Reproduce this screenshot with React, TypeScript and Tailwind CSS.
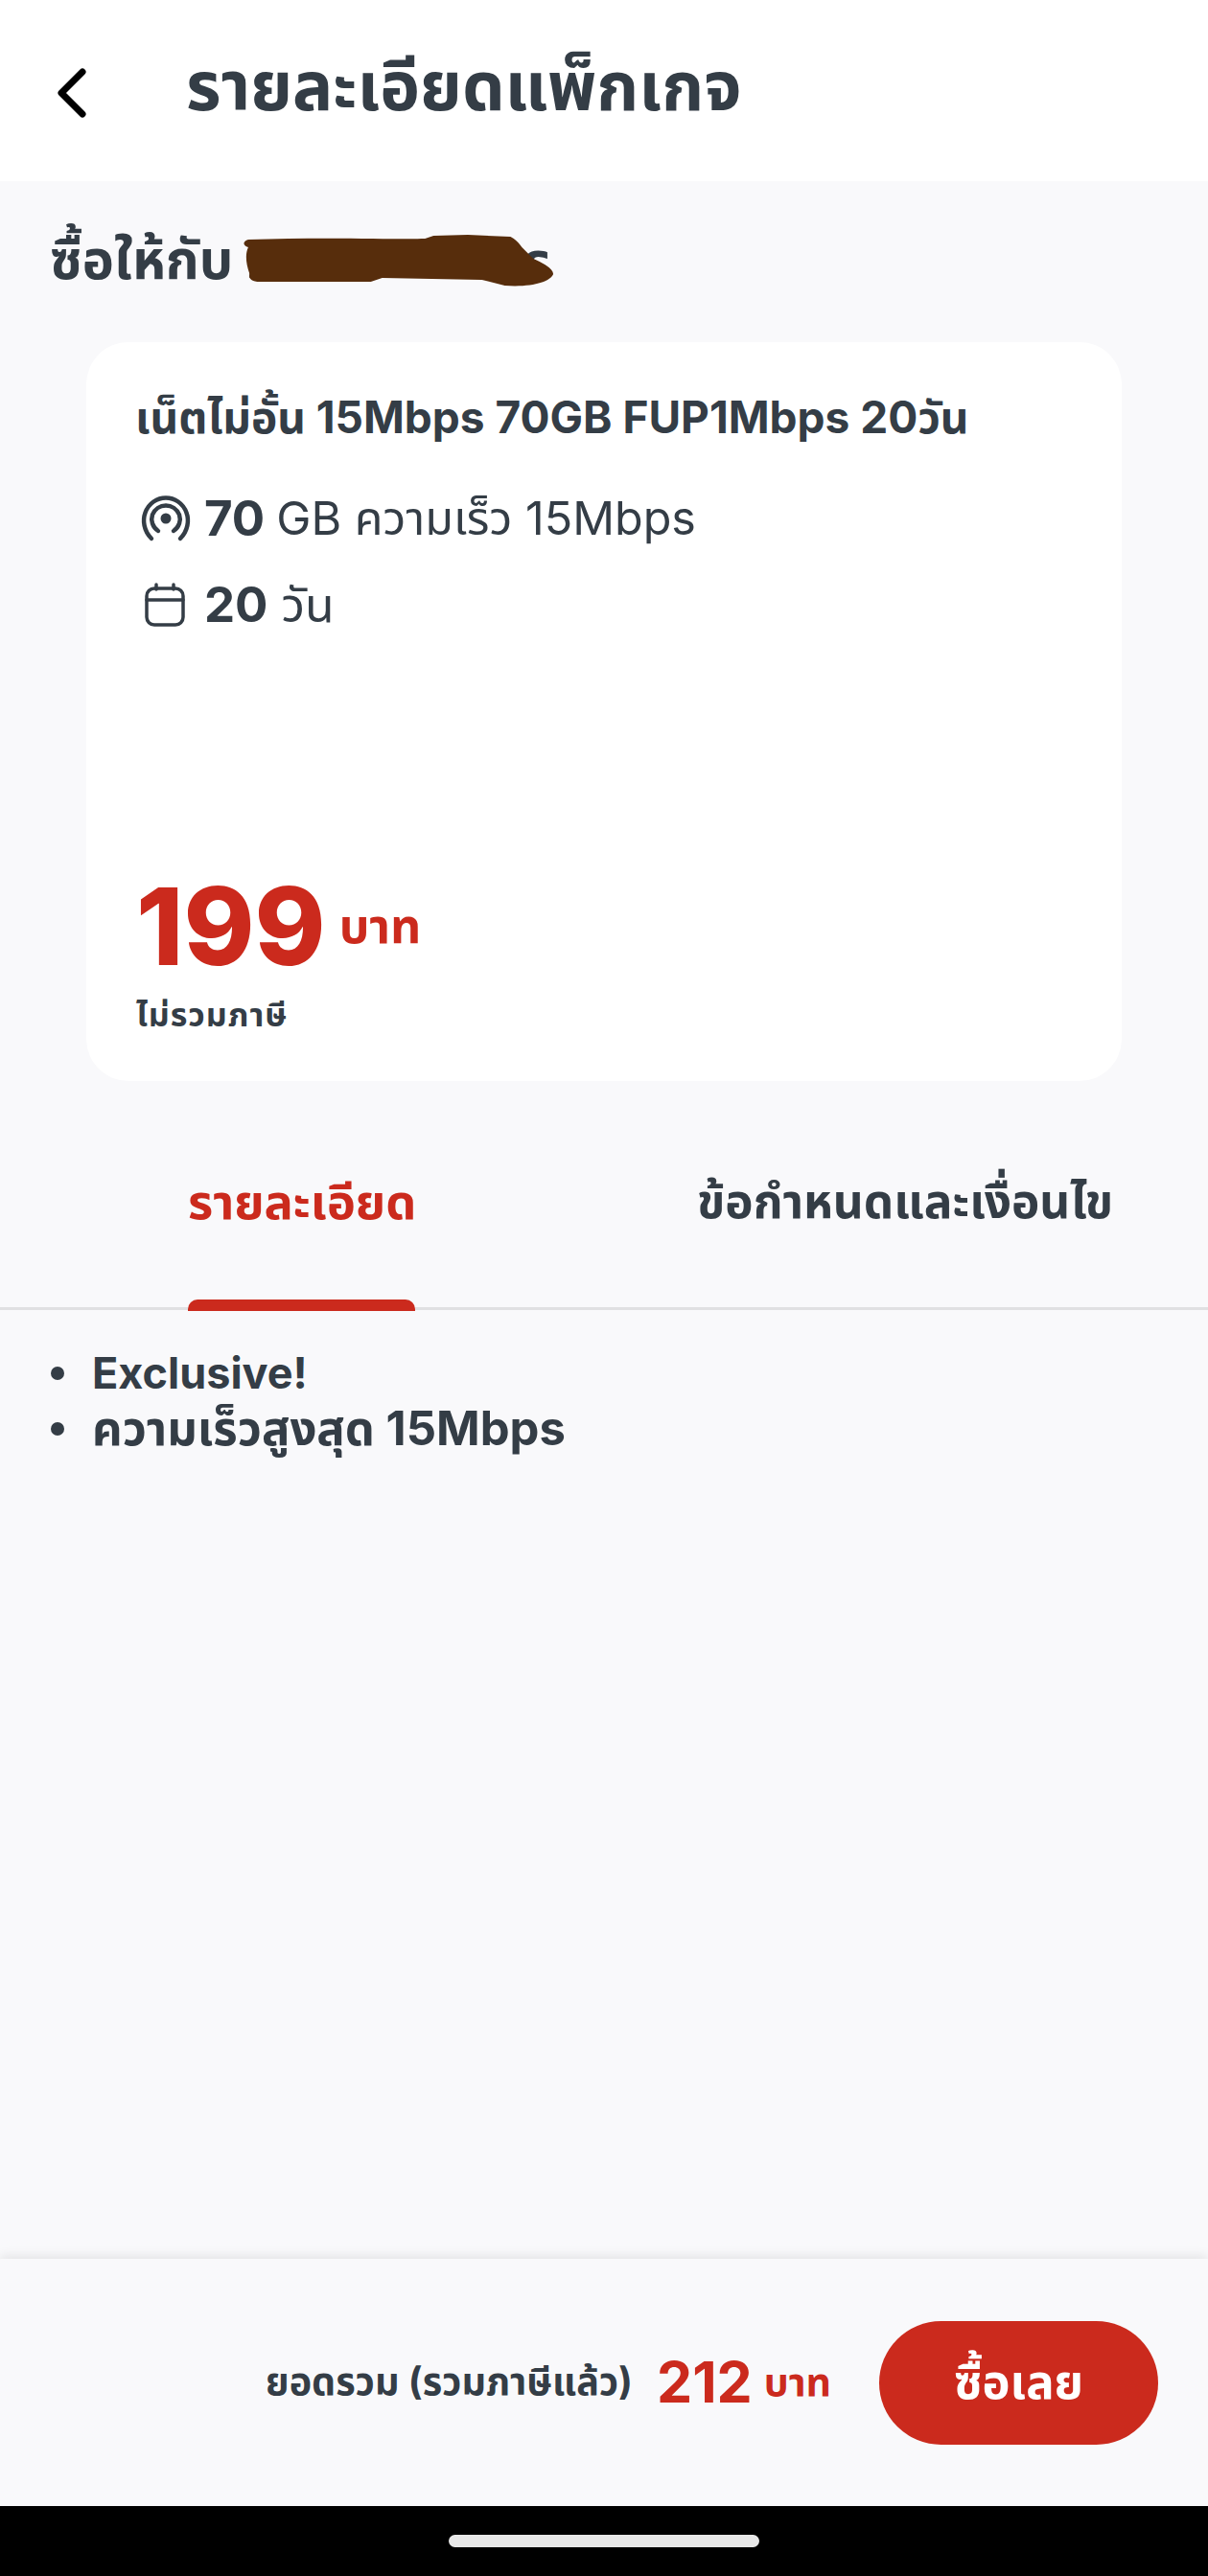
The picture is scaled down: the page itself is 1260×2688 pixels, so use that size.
import React from "react";

const font = { fontFamily: "Inter, 'Noto Sans', 'Noto Sans Thai', Roboto, sans-serif" };

function Signal() {
  return (
    <svg width="54" height="50" viewBox="0 0 54 50" fill="none" stroke="#343d46" strokeLinecap="round">
      <path d="M12 46 C4 38 2.500 27 5.500 19 C9 9 18 3.500 27 3.500 C36 3.500 45 9 48.500 19 C51.500 27 50 38 42 46" strokeWidth="4.500" />
      <path d="M19 38 C13 34 11 27 13 21 C15.500 15 21 11.500 27 11.500 C33 11.500 38.500 15 41 21 C43 27 41 34 35 38" strokeWidth="4.500" />
      <circle cx="27" cy="25" r="5.500" fill="#343d46" stroke="none" />
    </svg>
  );
}

function Calendar() {
  return (
    <svg width="42" height="46" viewBox="0 0 42 46" fill="none" stroke="#343d46" strokeWidth="3.500" strokeLinecap="round">
      <rect x="2" y="6" width="38" height="38" rx="8" />
      <path d="M2 18 H40 M12 2 V7 M30 2 V7" />
    </svg>
  );
}

function Scribble() {
  return (
    <svg className="absolute top-[55px] left-[250px]" width="336" height="58" viewBox="0 0 226 58" preserveAspectRatio="none" fill="#572d0c">
      <path d="M6 6 C60 3 110 6 130 5 L136 2 L160 1 L190 3 C194 6 196 10 198 14 L206 26 C212 30 220 36 220 42 C218 50 205 56 186 54 L170 48 L100 46 L92 50 L14 50 C8 50 6 46 7 42 C4 30 4 20 6 14 C2 12 2 8 6 6 Z" />
    </svg>
  );
}

export default function App() {
  return (
    <div className="flex h-[2688px] w-[1260px] flex-col overflow-hidden bg-[#f9f9fb] text-[#343d46]" style={font}>
      <header className="flex h-[189px] shrink-0 items-center bg-white pb-[8px]">
        <svg className="mt-[12px] ml-[60px] shrink-0" width="30" height="52" viewBox="0 0 30 52" fill="none" stroke="#000" strokeWidth="7" strokeLinecap="round" strokeLinejoin="round">
          <path d="M26 4 L4 26 L26 48" />
        </svg>
        <h1 className="ml-[104px] text-[70.500px] leading-none font-bold whitespace-nowrap">รายละเอียดแพ็กเกจ</h1>
      </header>

      <div className="relative flex h-[168px] shrink-0 items-center pb-[4px] pl-[52px] text-[56px] font-bold">
        <span>ซื้อให้กับ ธ</span>
        <span className="absolute top-[42px] left-[546px]">ร</span>
        <Scribble />
      </div>

      <section className="mx-[90px] flex h-[771px] shrink-0 flex-col rounded-[44px] bg-white px-[52px] pt-[48px]">
        <h2 className="-ml-[1px] text-[46px] leading-[60px] font-bold whitespace-nowrap">เน็ตไม่อั้น 15Mbps 70GB FUP1Mbps 20วัน</h2>
        <div className="mt-[46px] flex h-[60px] items-center">
          <span className="ml-[4px] flex"><Signal /></span>
          <span className="ml-[13px] text-[51px] font-bold">70</span>
          <span className="ml-[12px] text-[48.500px]">GB ความเร็ว 15Mbps</span>
        </div>
        <div className="mt-[30px] flex h-[60px] items-center">
          <span className="ml-[9px] flex"><Calendar /></span>
          <span className="ml-[20px] text-[51px] font-bold">20</span>
          <span className="ml-[14px] text-[50px]">วัน</span>
        </div>
        <div className="mt-auto flex items-center text-[#cb2a1d]">
          <span className="text-[112px] leading-[110px] font-extrabold">199</span>
          <span className="ml-[14px] text-[50px] leading-[60px] font-bold">บาท</span>
        </div>
        <div className="mt-[18px] mb-[49px] text-[34px] leading-[40px] font-bold tracking-[1px]">ไม่รวมภาษี</div>
      </section>

      <nav className="relative flex h-[239px] shrink-0 border-b-[3px] border-[#e0e0e2] text-[50px] font-bold">
        <div className="ml-[196px] pt-[88px] text-[50.500px] text-[#cb2a1d]">รายละเอียด</div>
        <div className="absolute top-[228px] left-[196px] h-[12px] w-[237px] rounded-t-[10px] bg-[#cb2a1d]" />
        <div className="absolute top-[88px] left-[727px] text-[49.500px]">ข้อกำหนดและเงื่อนไข</div>
      </nav>

      <ul className="mt-[37px] ml-[53px] flex flex-col text-[45px] leading-[58px] font-bold">
        <li className="flex items-center">
          <span className="mr-[29px] h-[14px] w-[14px] rounded-full bg-[#343d46]" />
          Exclusive!
        </li>
        <li className="flex items-center text-[49px]">
          <span className="mr-[29px] h-[14px] w-[14px] rounded-full bg-[#343d46]" />
          ความเร็วสูงสุด 15Mbps
        </li>
      </ul>

      <footer className="mt-auto flex h-[258px] shrink-0 items-center justify-end pr-[52px] shadow-[0_-4px_10px_rgba(0,0,0,0.08)]">
        <span className="text-[39.500px] font-bold whitespace-nowrap">ยอดรวม (รวมภาษีแล้ว)</span>
        <span className="ml-[25px] text-[59px] font-bold text-[#cb2a1d]">212</span>
        <span className="ml-[12px] text-[41px] font-bold text-[#cb2a1d]">บาท</span>
        <button className="ml-[50px] flex h-[129px] w-[291px] items-center justify-center rounded-full bg-[#cb2a1d] text-[49px] font-bold text-white">ซื้อเลย</button>
      </footer>

      <div className="flex h-[73px] shrink-0 justify-center bg-black pt-[30px]">
        <div className="h-[13px] w-[324px] rounded-full bg-[#e8e8e8]" />
      </div>
    </div>
  );
}
